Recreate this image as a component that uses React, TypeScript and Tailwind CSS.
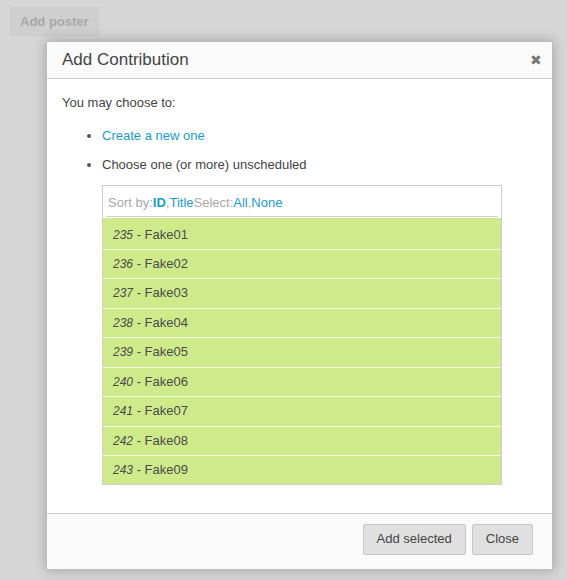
const rows = [
  { id: 235, name: 'Fake01' },
  { id: 236, name: 'Fake02' },
  { id: 237, name: 'Fake03' },
  { id: 238, name: 'Fake04' },
  { id: 239, name: 'Fake05' },
  { id: 240, name: 'Fake06' },
  { id: 241, name: 'Fake07' },
  { id: 242, name: 'Fake08' },
  { id: 243, name: 'Fake09' },
];

export default function App() {
  return (
    <div className="relative w-[567px] h-[580px] overflow-hidden bg-[#d6d6d6] font-['Liberation_Sans',Arial,sans-serif] text-[13px] text-[#444]">
      {/* page behind the overlay */}
      <div className="pt-[7px] pl-[10px]">
        <button className="h-[29px] px-[9px] rounded-[2px] border border-[#cbcbcb] bg-[#cfcfcf] text-[13px] font-bold text-[#a8a8a8]">
          Add poster
        </button>
      </div>

      {/* dialog */}
      <div className="absolute left-[46px] top-[41px] w-[507px] border border-[#bdbdbd] bg-white shadow-[0_0_12px_rgba(0,0,0,0.25)]">
        <div className="flex h-[37px] items-center justify-between border-b border-[#c8c8c8] bg-[#fafafa] pl-[15px] pr-[10px]">
          <span className="text-[17px] text-[#444]">Add Contribution</span>
          <span className="text-[14px] leading-none text-[#777]">✖</span>
        </div>

        <div className="px-[15px] pt-[15px] pb-[28px]">
          <p className="leading-[18px]">You may choose to:</p>
          <ul className="mt-[15px] list-disc pl-[40px] marker:text-[#555]">
            <li className="leading-[18px]">
              <a className="text-[#1a9bd0]">Create a new one</a>
            </li>
            <li className="mt-[11px] leading-[18px]">
              Choose one (or more) unscheduled
              <div className="mt-[11px] w-[400px] border border-[#cccccc] bg-white">
                <div className="mx-[3px] mb-[1px] flex h-[31px] items-center border-b border-[#cfcfcf] px-[2px] pt-[4px] text-[#a9a9a9]">
                  <span>Sort by:</span>
                  <span className="font-bold text-[#1a9bd0]">ID</span>
                  <span>,</span>
                  <span className="text-[#1a9bd0]">Title</span>
                  <span>Select:</span>
                  <span className="text-[#1a9bd0]">All</span>
                  <span>,</span>
                  <span className="text-[#1a9bd0]">None</span>
                </div>
                {rows.map((r, i) => (
                  <div
                    key={r.id}
                    className={`flex items-center bg-[#cfea8b] pl-[10px] text-[#4a4a4a] ${
                      i === 0
                        ? 'h-[31.5px] pt-[3px] border-b border-[#f3f8e4]'
                        : i === rows.length - 1
                          ? 'h-[27.5px] pt-[1px]'
                          : 'h-[29.5px] border-b border-[#f3f8e4]'
                    }`}
                  >
                    <span className="text-[12px] italic">{r.id}</span>
                    <span>&nbsp;- {r.name}</span>
                  </div>
                ))}
              </div>
            </li>
          </ul>
        </div>

        <div className="flex h-[56px] items-start justify-end gap-[6px] border-t border-[#c8c8c8] bg-[#fafafa] pt-[10px] pr-[19px]">
          <button className="h-[31px] rounded-[2px] border border-[#c6c6c6] bg-[#e0e0e0] px-[13px] text-[13px] text-[#444]">
            Add selected
          </button>
          <button className="h-[31px] rounded-[2px] border border-[#c6c6c6] bg-[#e0e0e0] px-[13px] text-[13px] text-[#444]">
            Close
          </button>
        </div>
      </div>
    </div>
  );
}
